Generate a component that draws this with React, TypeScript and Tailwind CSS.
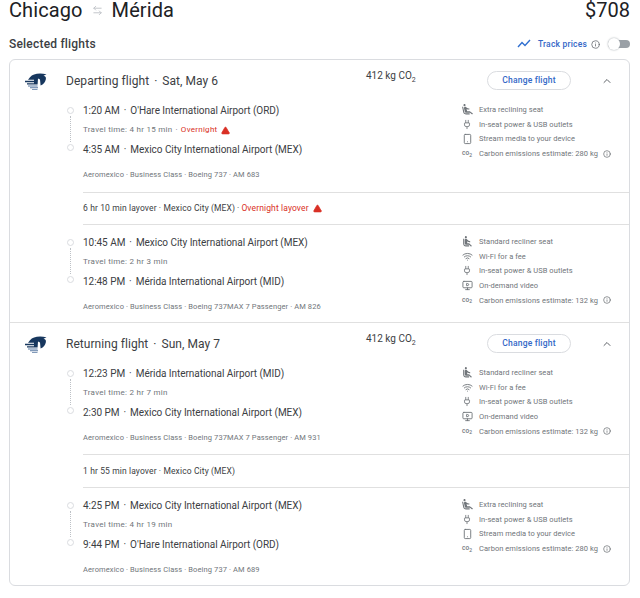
import React from "react";
import { ChevronUp, Info, Plug, Wifi, Smartphone, MonitorPlay, TriangleAlert, ArrowLeftRight } from "lucide-react";

const Extra = () => (
  <svg viewBox="0 0 24 24" className="w-[13px] h-[13px]" fill="#70757a">
    <path d="M5.35 5.64c-.9-.64-1.12-1.88-.49-2.79.63-.9 1.88-1.12 2.79-.49.9.64 1.12 1.88.49 2.79-.64.9-1.88 1.12-2.79.49zM16 19H8.93c-1.48 0-2.74-1.08-2.96-2.54L4 7H2l1.99 9.76C4.37 19.2 6.47 21 8.94 21H16v-2zm.23-4h-4.88l-1.03-4.1c1.58.89 3.28 1.54 5.15 1.22V9.99c-1.63.31-3.44-.27-4.69-1.25L9.14 7.47c-.23-.18-.49-.3-.76-.38-.32-.09-.66-.12-.99-.06h-.02c-1.23.22-2.05 1.39-1.84 2.61l1.35 5.92C7.16 16.98 8.39 18 9.83 18h6.85l3.82 3 1.5-1.5-5.77-4.5z" />
  </svg>
);
const Standard = () => (
  <svg viewBox="0 0 24 24" className="w-[13px] h-[13px]" fill="#70757a">
    <path d="M7.59 5.41c-.78-.78-.78-2.05 0-2.83.78-.78 2.05-.78 2.83 0 .78.78.78 2.05 0 2.83-.79.79-2.05.79-2.83 0zM6 16V7H4v9c0 2.76 2.24 5 5 5h6v-2H9c-1.66 0-3-1.34-3-3zm14 4.07L14.93 15H11.5v-3.68c1.4 1.15 3.6 2.16 5.5 2.16v-2.16c-1.66.02-3.61-.87-4.67-2.04l-1.4-1.55c-.19-.21-.43-.38-.69-.5-.29-.14-.62-.23-.96-.23h-.03C8.01 7 7 8.01 7 9.25V15c0 1.66 1.34 3 3 3h5.07l3.5 3.5L20 20.07z" />
  </svg>
);
const PlugI = () => <Plug className="w-[10px] h-[11px] text-[#70757a]" strokeWidth={2} />;
const WifiI = () => <Wifi className="w-[11px] h-[11px] text-[#70757a]" strokeWidth={2} />;
const Stream = () => <Smartphone className="w-[11px] h-[12px] text-[#70757a]" strokeWidth={2} />;
const Video = () => <MonitorPlay className="w-[11px] h-[11px] text-[#70757a]" strokeWidth={2} />;
const Co2 = () => (
  <span className="text-[6.5px] leading-none font-medium text-[#70757a]">
    co<sub className="text-[5px] align-baseline">2</sub>
  </span>
);

const Logo = () => (
  <svg viewBox="0 0 22 20" className="w-[22px] h-[20px] shrink-0">
    <path
      fill="#17375e"
      d="M5 6.2 C8 3 13 1.8 21.5 3.2 L18.5 4.8 C20.6 5.2 21.3 6.4 20.8 8.4 C20.3 11 18.6 13.2 15.6 14.4 L15 8.4 L13 7.6 L12.6 13.4 L2 13.4 L2 12.2 L9 12.2 L9 11.2 L0 11.2 L0 9.8 L9 9.8 L9 8.8 L3 8.8 Z"
    />
    <path fill="#5a7aa3" d="M3 14.4 H12.6 V15.4 H3 Z M5 16.2 H13 V17.2 H5 Z M7 18 H12.5 V18.8 H7 Z" />
  </svg>
);

type Amenity = { icon: React.ReactNode; text: string; info?: boolean };
type Seg = {
  dep: string;
  depAir: string;
  travel: string;
  overnight?: boolean;
  arr: string;
  arrAir: string;
  meta: string;
  amenities: Amenity[];
};

const rows = {
  extra: { icon: <Extra />, text: "Extra reclining seat" },
  standard: { icon: <Standard />, text: "Standard recliner seat" },
  wifi: { icon: <WifiI />, text: "Wi-Fi for a fee" },
  power: { icon: <PlugI />, text: "In-seat power & USB outlets" },
  stream: { icon: <Stream />, text: "Stream media to your device" },
  video: { icon: <Video />, text: "On-demand video" },
};
const carbon = (kg: number): Amenity => ({ icon: <Co2 />, text: `Carbon emissions estimate: ${kg} kg`, info: true });

const Circle = () => <div className="w-[7px] h-[7px] rounded-full border border-[#dadce0] bg-white shrink-0" />;

const Segment = ({ s, pt, pb }: { s: Seg; pt: string; pb: string }) => (
  <div className={`flex ${pt} ${pb}`}>
    <div className="w-[13px] flex flex-col items-start shrink-0">
      <div className="flex flex-col items-center w-[7px] mt-[6px] -ml-[3px]">
        <Circle />
        <div className="h-[26px] border-l border-dotted border-[#bdc1c6] my-[2px]" />
        <Circle />
      </div>
    </div>
    <div className="w-[372px] shrink-0">
      <div className="h-[19px] flex items-center text-[10px] tracking-[-0.04px] text-[#3c4043]">
        {s.dep}
        <span className="mx-[4px]">·</span>
        {s.depAir}
      </div>
      <div className="h-[20px] flex items-center text-[8px] tracking-[0.27px] text-[#70757a]">
        {s.travel}
        {s.overnight && (
          <>
            <span className="mx-[3px]">·</span>
            <span className="text-[#d93025]">Overnight</span>
            <TriangleAlert className="w-[9px] h-[9px] ml-[4px] text-[#d93025] fill-[#d93025]" stroke="#d93025" />
          </>
        )}
      </div>
      <div className="h-[19px] flex items-center text-[10px] tracking-[-0.04px] text-[#3c4043]">
        {s.arr}
        <span className="mx-[4px]">·</span>
        {s.arrAir}
      </div>
      <div className="mt-[9px] h-[14px] flex items-center text-[7.5px] tracking-[0.11px] text-[#70757a]">{s.meta}</div>
    </div>
    <div className="flex-1 flex flex-col mt-[1.5px]">
      {s.amenities.map((a) => (
        <div key={a.text} className="h-[14.6px] flex items-center text-[7.5px] tracking-[0.05px] text-[#70757a]">
          <span className="w-[24px] flex justify-center shrink-0">{a.icon}</span>
          <span className="whitespace-nowrap">{a.text}</span>
          {a.info && <Info className="w-[8px] h-[8px] ml-[5px] text-[#5f6368]" />}
        </div>
      ))}
    </div>
  </div>
);

const Layover = ({ text, warn, h }: { text: string; warn?: boolean; h: string }) => (
  <div className={`${h} ml-[13px] border-y border-[#e0e0e0] flex items-center text-[8.5px] tracking-[0.12px] text-[#3c4043]`}>
    {text}
    {warn && (
      <>
        <span className="mx-[2px]">·</span>
        <span className="text-[#d93025]">Overnight layover</span>
        <TriangleAlert className="w-[9px] h-[9px] ml-[4px] text-[#d93025] fill-[#d93025]" stroke="#d93025" />
      </>
    )}
  </div>
);

const Header = ({ title, date, co2Offset }: { title: string; date: string; co2Offset: string }) => (
  <div className="h-[41px] flex items-center pl-[15px]">
    <Logo />
    <div className="ml-[19px] w-[300px] shrink-0 text-[12px] text-[#3c4043] tracking-[0.05px]">
      {title}
      <span className="mx-[5px]">·</span>
      {date}
    </div>
    <div className={`w-[121px] shrink-0 ${co2Offset} text-[10px] text-[#3c4043]`}>
      412 kg CO<sub className="text-[7px] align-baseline relative top-[3px]">2</sub>
    </div>
    <button className="w-[84px] h-[19px] rounded-full border border-[#dadce0] text-[8.5px] font-medium tracking-[0.2px] text-[#3367c7]">
      Change flight
    </button>
    <ChevronUp className="ml-[30px] w-[12px] h-[12px] text-[#5f6368]" />
  </div>
);

const dep1: Seg = {
  dep: "1:20 AM",
  depAir: "O'Hare International Airport (ORD)",
  travel: "Travel time: 4 hr 15 min",
  overnight: true,
  arr: "4:35 AM",
  arrAir: "Mexico City International Airport (MEX)",
  meta: "Aeromexico · Business Class · Boeing 737 · AM 683",
  amenities: [rows.extra, rows.power, rows.stream, carbon(280)],
};
const dep2: Seg = {
  dep: "10:45 AM",
  depAir: "Mexico City International Airport (MEX)",
  travel: "Travel time: 2 hr 3 min",
  arr: "12:48 PM",
  arrAir: "Mérida International Airport (MID)",
  meta: "Aeromexico · Business Class · Boeing 737MAX 7 Passenger · AM 826",
  amenities: [rows.standard, rows.wifi, rows.power, rows.video, carbon(132)],
};
const ret1: Seg = {
  dep: "12:23 PM",
  depAir: "Mérida International Airport (MID)",
  travel: "Travel time: 2 hr 7 min",
  arr: "2:30 PM",
  arrAir: "Mexico City International Airport (MEX)",
  meta: "Aeromexico · Business Class · Boeing 737MAX 7 Passenger · AM 931",
  amenities: [rows.standard, rows.wifi, rows.power, rows.video, carbon(132)],
};
const ret2: Seg = {
  dep: "4:25 PM",
  depAir: "Mexico City International Airport (MEX)",
  travel: "Travel time: 4 hr 19 min",
  arr: "9:44 PM",
  arrAir: "O'Hare International Airport (ORD)",
  meta: "Aeromexico · Business Class · Boeing 737 · AM 689",
  amenities: [rows.extra, rows.power, rows.stream, carbon(280)],
};

export default function App() {
  return (
    <div className="w-[640px] h-[598px] bg-white font-['Roboto',sans-serif]">
      <div className="h-[20px] pl-[9px] pr-[10px] flex items-center justify-between">
        <div className="flex items-center text-[20px] leading-[20px] tracking-[0.1px] text-[#202124]">
          <span>Chicago</span>
          <ArrowLeftRight className="w-[11px] h-[11px] mx-[9px] text-[#bdc1c6]" />
          <span>Mérida</span>
        </div>
        <div className="text-[20px] leading-[20px] text-[#202124]">$708</div>
      </div>
      <div className="h-[39px] pl-[9px] pr-[10px] flex items-end justify-between pb-[8px]">
        <span className="text-[12px] leading-[14px] font-medium text-[#3c4043] tracking-[0.2px]">Selected flights</span>
        <div className="flex items-center h-[14px]">
          <svg viewBox="0 0 14 10" className="w-[14px] h-[10px]" fill="none" stroke="#2f6fd0" strokeWidth="1.4">
            <path d="M1 8 L5 3.5 L8 6.5 L13 1" />
          </svg>
          <span className="ml-[7px] text-[8.5px] font-medium tracking-[0.2px] text-[#3367c7]">Track prices</span>
          <Info className="w-[9px] h-[9px] ml-[4px] text-[#5f6368]" />
          <div className="relative ml-[8px] w-[22px] h-[8px] rounded-full bg-[#9aa0a6]">
            <div className="absolute left-0 -top-[2px] w-[12px] h-[12px] rounded-full bg-white shadow-[0_0_2px_#9aa0a6]" />
          </div>
        </div>
      </div>
      <div className="ml-[9px] w-[621px] h-[527px] border border-[#dadce0] rounded-[6px]">
        <Header title="Departing flight" date="Sat, May 6" co2Offset="-mt-[11px]" />
        <div className="pl-[60px]">
          <Segment s={dep1} pt="pt-0" pb="pb-[10px]" />
          <Layover text="6 hr 10 min layover · Mexico City (MEX)" warn h="h-[33px]" />
          <Segment s={dep2} pt="pt-[8px]" pb="pb-[8px]" />
        </div>
        <div className="border-t border-[#e0e0e0]">
          <Header title="Returning flight" date="Sun, May 7" co2Offset="-mt-[10px]" />
          <div className="pl-[60px]">
            <Segment s={ret1} pt="pt-0" pb="pb-[9px]" />
            <Layover text="1 hr 55 min layover · Mexico City (MEX)" h="h-[34px]" />
            <Segment s={ret2} pt="pt-[8px]" pb="pb-0" />
          </div>
        </div>
      </div>
    </div>
  );
}
